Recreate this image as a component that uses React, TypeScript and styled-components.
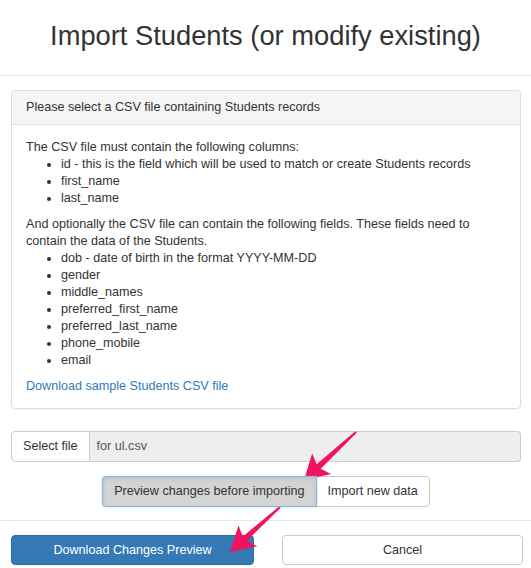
import React from "react";
import styled, { createGlobalStyle } from "styled-components";

const GlobalStyle = createGlobalStyle`
  html, body {
    margin: 0;
    padding: 0;
    background: #fff;
  }
  body {
    font-family: "Liberation Sans", Arial, sans-serif;
    font-size: 12.6px;
    line-height: 17px;
    color: #333;
  }
  * {
    box-sizing: border-box;
  }
`;

const Page = styled.div`
  position: relative;
  width: 531px;
  height: 568px;
  overflow: hidden;
`;

const Header = styled.div`
  height: 76px;
  border-bottom: 1px solid #e5e5e5;
  display: flex;
  align-items: center;
  justify-content: center;
  padding-bottom: 4px;
`;

const Title = styled.h3`
  margin: 0;
  font-size: 27.3px;
  font-weight: normal;
  line-height: 33px;
  color: #333;
`;

const Body = styled.div`
  padding: 14px 10px 0 11px;
`;

const Panel = styled.div`
  border: 1px solid #ddd;
  border-radius: 4px;
  box-shadow: 0 1px 1px rgba(0, 0, 0, 0.05);
`;

const PanelHeading = styled.div`
  background: #f5f5f5;
  border-bottom: 1px solid #ddd;
  border-radius: 3px 3px 0 0;
  padding: 8px 14px;
`;

const PanelBody = styled.div`
  padding: 14px 14px 13px;
`;

const Para = styled.p`
  margin: 0;
`;

const List = styled.ul`
  margin: 0 0 9px;
  padding-left: 35px;
`;

const Link = styled.a`
  color: #337ab7;
  text-decoration: none;
`;

const FileRow = styled.div`
  display: flex;
  margin-top: 22px;
  height: 31px;
`;

const FileButton = styled.div`
  display: flex;
  align-items: center;
  padding: 0 11px;
  border: 1px solid #ccc;
  border-radius: 4px 0 0 4px;
  background: #fff;
`;

const FileName = styled.div`
  flex: 1;
  display: flex;
  align-items: center;
  padding: 0 7px;
  border: 1px solid #ccc;
  border-left: none;
  border-radius: 0 4px 4px 0;
  background: #eee;
  color: #555;
`;

const ModeRow = styled.div`
  display: flex;
  justify-content: center;
  margin-top: 14px;
`;

const ModeButton = styled.div<{ $active?: boolean; $first?: boolean }>`
  height: 31px;
  display: flex;
  align-items: center;
  padding: 0 11px;
  border: 1px solid ${(p) => (p.$active ? "#8fb3e3" : "#ccc")};
  border-radius: ${(p) => (p.$first ? "4px 0 0 4px" : "0 4px 4px 0")};
  background: ${(p) => (p.$active ? "#d4d4d4" : "#fff")};
  box-shadow: ${(p) =>
    p.$active ? "inset 0 2px 4px rgba(0,0,0,0.1), 0 0 2px rgba(102,175,233,0.6)" : "none"};
  margin-left: ${(p) => (p.$first ? "0" : "-1px")};
  position: relative;
  z-index: ${(p) => (p.$active ? 1 : 0)};
`;

const Footer = styled.div`
  margin-top: 13px;
  border-top: 1px solid #e5e5e5;
  padding: 14px 9px 0 11px;
  display: grid;
  grid-template-columns: 243px 241px;
  column-gap: 28px;
`;

const FooterButton = styled.div<{ $primary?: boolean }>`
  height: 30px;
  display: flex;
  align-items: center;
  justify-content: center;
  border-radius: 4px;
  border: 1px solid ${(p) => (p.$primary ? "#2e6da4" : "#ccc")};
  background: ${(p) => (p.$primary ? "#337ab7" : "#fff")};
  color: ${(p) => (p.$primary ? "#fff" : "#333")};
`;

const Overlay = styled.svg`
  position: absolute;
  left: 0;
  top: 0;
  pointer-events: none;
`;

type Pt = [number, number];

function arrowPoints(tail: Pt, tip: Pt, headLen: number, headW: number, shaftW: number) {
  const dx = tip[0] - tail[0];
  const dy = tip[1] - tail[1];
  const len = Math.hypot(dx, dy);
  const ux = dx / len;
  const uy = dy / len;
  const nx = -uy;
  const ny = ux;
  const base: Pt = [tip[0] - ux * headLen, tip[1] - uy * headLen];
  const notch: Pt = [base[0] + ux * 4, base[1] + uy * 4];
  const pts: Pt[] = [
    [tail[0] + nx * 1, tail[1] + ny * 1],
    [notch[0] + nx * shaftW, notch[1] + ny * shaftW],
    [base[0] + nx * headW, base[1] + ny * headW],
    tip,
    [base[0] - nx * headW, base[1] - ny * headW],
    [notch[0] - nx * shaftW, notch[1] - ny * shaftW],
    [tail[0] - nx * 1, tail[1] - ny * 1],
  ];
  return pts.map((p) => p.join(",")).join(" ");
}

const requiredCols = [
  "id - this is the field which will be used to match or create Students records",
  "first_name",
  "last_name",
];

const optionalCols = [
  "dob - date of birth in the format YYYY-MM-DD",
  "gender",
  "middle_names",
  "preferred_first_name",
  "preferred_last_name",
  "phone_mobile",
  "email",
];

export default function App() {
  return (
    <Page>
      <GlobalStyle />
      <Header>
        <Title>Import Students (or modify existing)</Title>
      </Header>
      <Body>
        <Panel>
          <PanelHeading>Please select a CSV file containing Students records</PanelHeading>
          <PanelBody>
            <Para>The CSV file must contain the following columns:</Para>
            <List>
              {requiredCols.map((c) => (
                <li key={c}>{c}</li>
              ))}
            </List>
            <Para>
              And optionally the CSV file can contain the following fields. These fields need to
              contain the data of the Students.
            </Para>
            <List>
              {optionalCols.map((c) => (
                <li key={c}>{c}</li>
              ))}
            </List>
            <Link href="#">Download sample Students CSV file</Link>
          </PanelBody>
        </Panel>
        <FileRow>
          <FileButton>Select file</FileButton>
          <FileName>for ul.csv</FileName>
        </FileRow>
        <ModeRow>
          <ModeButton $active $first>
            Preview changes before importing
          </ModeButton>
          <ModeButton>Import new data</ModeButton>
        </ModeRow>
      </Body>
      <Footer>
        <FooterButton $primary>Download Changes Preview</FooterButton>
        <FooterButton>Cancel</FooterButton>
      </Footer>
      <Overlay width="531" height="568" viewBox="0 0 531 568">
        <polygon points={arrowPoints([356, 432], [304, 480], 24, 14, 3)} fill="#f2135d" />
        <polygon points={arrowPoints([280, 507], [230, 552], 24, 14, 3)} fill="#f2135d" />
      </Overlay>
    </Page>
  );
}
